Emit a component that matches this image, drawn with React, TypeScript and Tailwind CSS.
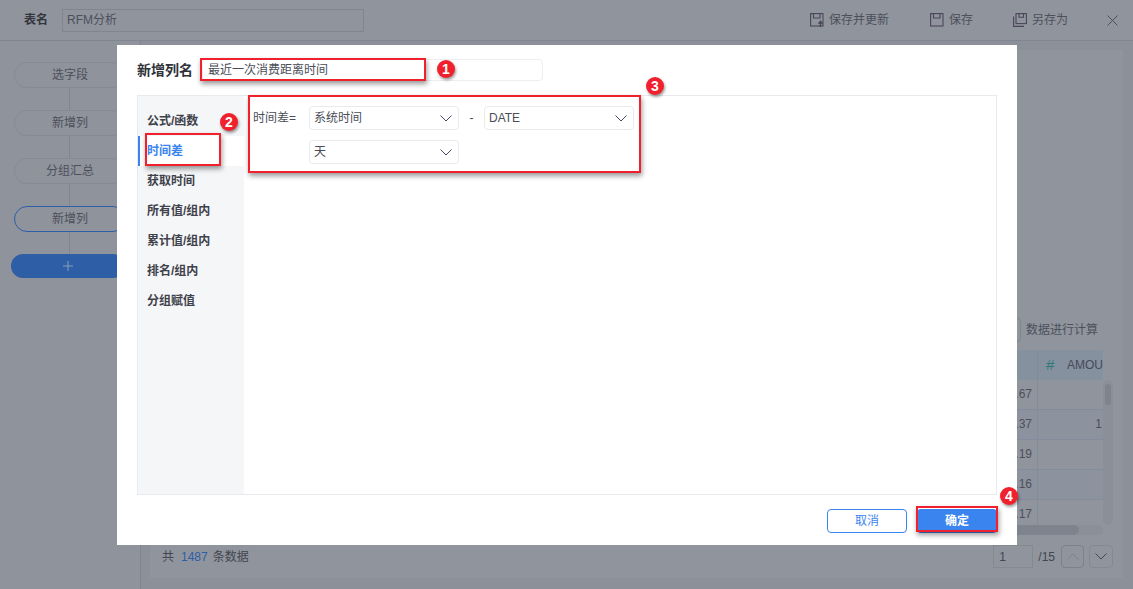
const font = { fontFamily: '"Liberation Sans", "Noto Sans CJK SC", sans-serif' };

function Chevron({ className = "" }: { className?: string }) {
  return (
    <svg width="12" height="7" viewBox="0 0 12 7" fill="none" stroke="currentColor" strokeWidth="1" className={className}>
      <polyline points="0.5,0.5 6,6 11.5,0.5" />
    </svg>
  );
}

function SaveIcon({ upload, stacked }: { upload?: boolean; stacked?: boolean }) {
  return (
    <svg width="14" height="14" viewBox="0 0 14 14" fill="none" stroke="#4a4658" strokeWidth="1.1">
      {stacked && <path d="M0.6 3.5v9.9h10.4" />}
      <rect x={stacked ? 3 : 0.6} y="0.6" width={stacked ? 10.4 : 12.4} height={stacked ? 10 : 12.4} />
      <path d={stacked ? "M6 0.6v3.6h4.5V0.6" : "M3.5 0.6v4.4h6.5V0.6"} />
      {upload && <path d="M10.5 14V8.5M8.5 10.8l2-2.5 2 2.5" strokeWidth="1.4" />}
    </svg>
  );
}

function Step({ label, active }: { label: string; active?: boolean }) {
  return (
    <div
      className={`flex h-[26px] w-[112px] items-center justify-center rounded-[13px] border text-xs text-[#4c505b] ${
        active ? "border-[#2f5ea8]" : "border-[#858a95]"
      }`}
    >
      {label}
    </div>
  );
}

function Select({ value }: { value: string }) {
  return (
    <div className="flex h-6 w-[150px] items-center justify-between rounded-sm border border-[#e8eaee] pl-1 pr-[6px] text-xs text-[#4a4d57]">
      <span>{value}</span>
      <Chevron className="text-[#3f4a66]" />
    </div>
  );
}

function Badge({ n, className }: { n: number; className: string }) {
  return (
    <div
      className={`absolute flex h-[18px] w-[18px] items-center justify-center rounded-full bg-[#f0202c] text-sm font-bold text-white shadow-[1px_2px_3px_rgba(0,0,0,0.4)] ${className}`}
    >
      {n}
    </div>
  );
}

function Mark({ className }: { className: string }) {
  return <div className={`absolute border-2 border-[#f0202c] shadow-[1px_3px_5px_rgba(0,0,0,0.4)] ${className}`} />;
}

const rows = [".67", ".37", ".19", ".16", ".17"];
const menu = ["公式/函数", "时间差", "获取时间", "所有值/组内", "累计值/组内", "排名/组内", "分组赋值"];

export default function App() {
  return (
    <div style={font} className="relative flex h-[589px] w-[1133px] flex-col overflow-hidden bg-[#8c9099] text-[#43464f]">
      {/* page behind the dialog */}
      <div className="flex h-[41px] shrink-0 items-center border-b border-[#81858f] bg-[#90949d] pl-6 pr-[15px]">
        <span className="text-xs font-bold text-[#33363d]">表名</span>
        <div className="ml-[14px] flex h-[23px] w-[302px] items-center border border-[#81858f] pl-1 text-xs text-[#4c505b]">RFM分析</div>
        <div className="ml-auto flex items-center text-xs text-[#4c505b]">
          <span className="flex items-center gap-[5px]"><SaveIcon upload />保存并更新</span>
          <span className="ml-[41px] flex items-center gap-[5px]"><SaveIcon />保存</span>
          <span className="ml-[40px] flex items-center gap-[5px]"><SaveIcon stacked />另存为</span>
          <svg width="11" height="11" viewBox="0 0 11 11" stroke="#4c505b" className="ml-[39px]"><path d="M0.5 0.5l10 10M10.5 0.5l-10 10" /></svg>
        </div>
      </div>
      <div className="flex min-h-0 flex-1">
        <div className="flex w-[141px] shrink-0 flex-col items-start border-r border-[#81858f] bg-[#8f939c] pl-[14px] pt-[21px]">
          <Step label="选字段" />
          <div className="ml-[55px] h-[22px] w-px bg-[#81858f]" />
          <Step label="新增列" />
          <div className="ml-[55px] h-[22px] w-px bg-[#81858f]" />
          <Step label="分组汇总" />
          <div className="ml-[55px] h-[22px] w-px bg-[#81858f]" />
          <Step label="新增列" active />
          <div className="ml-[55px] h-[22px] w-px bg-[#81858f]" />
          <div className="-ml-[3px] flex h-6 w-[114px] items-center justify-center rounded-xl bg-[#2d5ea6]">
            <svg width="10" height="10" viewBox="0 0 10 10" stroke="#8c9db8"><path d="M5 0v10M0 5h10" /></svg>
          </div>
        </div>
        <div className="flex min-w-0 flex-1 flex-col pb-[11px] pl-[9px] pr-[10px] pt-[9px]">
          <div className="flex flex-1 flex-col bg-[#90949d] pt-[268px]">
            <div className="flex h-[31px] items-start justify-end gap-[5px] pr-[25px] text-xs text-[#4c505b]">
              <div className="h-6 w-16 rounded-sm border border-[#81858f]" />
              <span className="leading-6">数据进行计算</span>
            </div>
            <div className="mt-px flex justify-end pr-[10px]">
              <div className="w-[943px]">
                <div className="grid h-[30px] grid-cols-[1fr_66px] bg-[#85919f] text-xs text-[#45495a]">
                  <div />
                  <div className="flex items-center border-l border-[#7f8b9b] pl-[8px]">
                    <span className="w-[21px] text-[15px] text-[#2f7a78]">#</span>
                    <span>AMOU</span>
                  </div>
                </div>
                <div className="h-[145px] overflow-hidden">
                  {rows.map((r, i) => (
                    <div key={r} className={`grid h-[30px] grid-cols-[1fr_66px] border-b border-[#838c9c] text-xs text-[#4c505b] ${i % 2 ? "bg-[#8c939f]" : "bg-[#90949d]"}`}>
                      <div className="flex items-center justify-end pb-px pr-[5px]">{r}</div>
                      <div className="flex items-center justify-end border-l border-[#838c9c] pb-px pr-px">{i === 1 ? "1" : ""}</div>
                    </div>
                  ))}
                </div>
                <div className="h-[10px] rounded-[5px] bg-[#8b8f98]">
                  <div className="ml-auto mr-[24px] h-[10px] w-[300px] rounded-[5px] bg-[#7f838d]" />
                </div>
              </div>
              <div className="mt-[30px] h-[145px] w-[10px] rounded-[5px] bg-[#8b8f98] px-[2px] pt-[4px]">
                <div className="h-[21px] rounded-[3px] bg-[#7f838d]" />
              </div>
            </div>
            <div className="mt-auto flex h-[43px] items-center pl-3 pr-[10px] text-xs">
              <span>共</span>
              <span className="ml-[7px] text-[#2f5ea8]">1487</span>
              <span className="ml-[5px]">条数据</span>
              <div className="ml-auto flex h-[23px] w-10 items-center border border-[#858992] pl-[5px] text-[#40475a]">1</div>
              <span className="ml-[5px]">/15</span>
              <div className="ml-[6px] flex h-[23px] w-[23px] items-center justify-center rounded-sm border border-[#7d818b] text-[#7d818b]"><Chevron className="rotate-180" /></div>
              <div className="ml-[5px] flex h-[23px] w-6 items-center justify-center rounded-sm border border-[#858992] text-[#40475a]"><Chevron /></div>
            </div>
          </div>
        </div>
      </div>

      {/* dialog */}
      <div className="absolute left-[117px] top-[45px] flex h-[500px] w-[900px] flex-col bg-white px-5">
        <div className="flex h-[50px] shrink-0 items-center">
          <span className="text-sm font-bold leading-none text-[#2f3239]">新增列名</span>
          <div className="ml-[9px] flex h-[22px] w-[341px] items-center rounded-sm border border-[#eceef1] pl-[5px] text-xs text-[#4a4d57]">最近一次消费距离时间</div>
        </div>
        <div className="flex h-[400px] w-[860px] border border-[#e8eaee]">
          <div className="w-[106px] bg-[#f5f6f8] pt-[10px]">
            {menu.map((m, i) => (
              <div
                key={m}
                className={`flex h-[30px] items-center border-l-2 pl-[7px] text-xs font-bold ${
                  i === 1 ? "border-[#3a84f0] bg-white text-[#3a84f0]" : "border-transparent text-[#3f424b]"
                }`}
              >
                {m}
              </div>
            ))}
          </div>
          <div className="flex-1 pl-[9px] pt-[10px] text-xs text-[#4a4d57]">
            <div className="flex items-center">
              <span className="w-[56px]">时间差=</span>
              <Select value="系统时间" />
              <span className="w-[25px] text-center">-</span>
              <Select value="DATE" />
            </div>
            <div className="ml-[56px] mt-[10px]">
              <Select value="天" />
            </div>
          </div>
        </div>
        <div className="flex flex-1 items-center justify-end gap-[10px] pt-[1px]">
          <button className="h-6 w-20 rounded-sm border border-[#3a84f0] text-xs text-[#3a84f0]">取消</button>
          <button className="h-6 w-20 rounded-sm bg-[#3a84f0] text-xs font-bold text-white">确定</button>
        </div>
      </div>

      {/* red annotations */}
      <Mark className="left-[200px] top-[58px] h-[23px] w-[226px]" />
      <Mark className="left-[145px] top-[133px] h-[33px] w-[76px]" />
      <Mark className="left-[248px] top-[95px] h-[78px] w-[393px]" />
      <Mark className="left-[916px] top-[506px] h-[26px] w-[82px]" />
      <Badge n={1} className="left-[437px] top-[60px]" />
      <Badge n={2} className="left-[220px] top-[113px]" />
      <Badge n={3} className="left-[646px] top-[77px]" />
      <Badge n={4} className="left-[1000px] top-[487px]" />
    </div>
  );
}
